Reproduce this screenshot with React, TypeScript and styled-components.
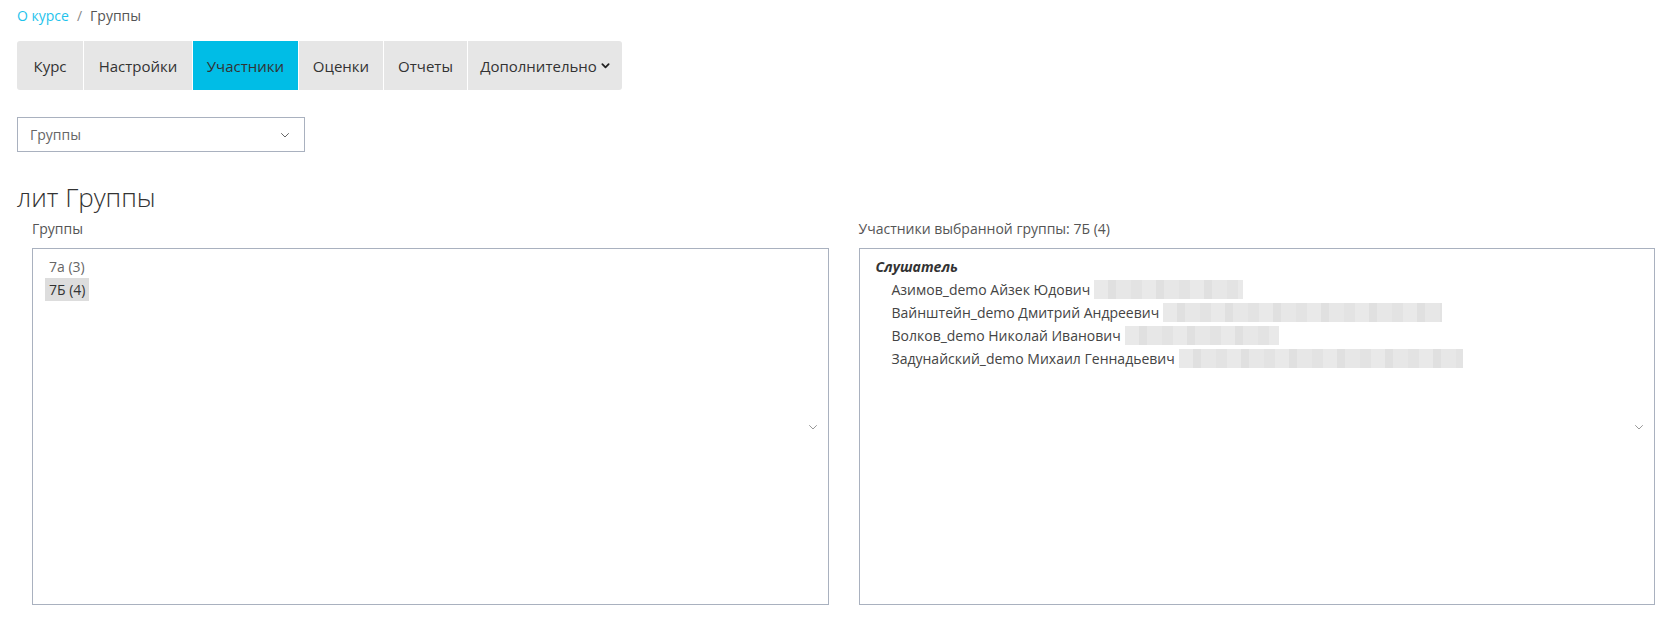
import styled, { createGlobalStyle } from "styled-components";

const GlobalStyle = createGlobalStyle`
  body {
    margin: 0;
    background: #ffffff;
    font-family: "Open Sans", "Liberation Sans", sans-serif;
    font-size: 15px;
    color: #333333;
  }
`

const Page = styled.div`
    padding: 5px 15px 0 17px;
`

const Breadcrumb = styled.nav`
    display: flex;
    align-items: center;
    gap: 8px;
    height: 20px;
    font-size: 14px;
    color: #555;
`

const Crumb = styled.a`
    color: #1fc3ec;
    text-decoration: none;
`

const Sep = styled.span`
    color: #888;
`

const Tabs = styled.ul`
    display: inline-flex;
    list-style: none;
    margin: 16px 0 0;
    padding: 0;
    border-radius: 3px;
    overflow: hidden;
    gap: 1px;
    background-color: #ffffff;
`

const Tab = styled.li<{ $active?: boolean; $w: number }>`
    display: flex;
    align-items: center;
    justify-content: center;
    gap: 4px;
    width: ${p => p.$w}px;
    height: 49px;
    background: ${p => (p.$active ? "#00bde6" : "#e6e6e6")};
    color: #333;
    font-size: 15px;
`

const Select = styled.div`
    display: flex;
    align-items: center;
    justify-content: space-between;
    width: 288px;
    height: 35px;
    box-sizing: border-box;
    margin-top: 27px;
    padding: 0 14px 0 12px;
    border: 1px solid #a9b1bf;
    color: #666;
    font-size: 14px;
`

const Heading = styled.h2`
    margin: 28px 0 0;
    font-size: 26px;
    font-weight: 300;
    color: #333;
    line-height: 34px;
`

const Columns = styled.div`
    display: grid;
    grid-template-columns: 1fr 1fr;
    gap: 30px;
    margin-top: 5px;
    padding-left: 15px;
`

const Field = styled.div`
    display: flex;
    flex-direction: column;
`

const Label = styled.label`
    font-size: 14px;
    color: #555;
    height: 20px;
    line-height: 20px;
    margin-bottom: 9px;
`

const ListBox = styled.div`
    display: flex;
    align-items: center;
    height: 357px;
    box-sizing: border-box;
    border: 1px solid #a9b1bf;
    padding: 0 10px 0 12px;
`

const ListContent = styled.div`
    flex: 1;
    align-self: stretch;
    padding-top: 6px;
`

const Option = styled.div<{ $selected?: boolean; $indent?: boolean }>`
    display: flex;
    align-items: center;
    width: fit-content;
    height: 23px;
    padding: 0 4px;
    margin-left: ${p => (p.$indent ? "16px" : "0")};
    background: ${p => (p.$selected ? "#dddddd" : "transparent")};
    color: ${p => (p.$selected ? "#333" : "#666")};
    font-size: 14px;
`

const Member = styled(Option)`
    color: #444;
`

const GroupTitle = styled.div`
    height: 23px;
    line-height: 23px;
    padding-left: 4px;
    font-weight: 700;
    font-style: italic;
    font-size: 14px;
    color: #333;
`

const Blur = styled.span<{ $w: number }>`
    display: inline-block;
    width: ${p => p.$w}px;
    height: 19px;
    margin-left: 4px;
    background: repeating-linear-gradient(
        90deg,
        #e9e9e9 0 14px,
        #e0e0e0 14px 22px,
        #e7e7e7 22px 37px,
        #e3e3e3 37px 48px
    );
`

const Chevron = ({ size = 10, color = "#888", weight = 1 }: { size?: number; color?: string; weight?: number }) => (
  <svg width={size} height={size} viewBox="0 0 10 10" fill="none">
    <path d="M1.5 3.5 L5 7 L8.5 3.5" stroke={color} strokeWidth={weight} strokeLinecap="round" strokeLinejoin="round" />
  </svg>
)

const tabs = [
  { label: "Курс", w: 66 },
  { label: "Настройки", w: 108 },
  { label: "Участники", w: 105, active: true },
  { label: "Оценки", w: 84 },
  { label: "Отчеты", w: 83 },
  { label: "Дополнительно", w: 154, menu: true },
]

const members = [
  { name: "Азимов_demo Айзек Юдович", w: 149 },
  { name: "Вайнштейн_demo Дмитрий Андреевич", w: 279 },
  { name: "Волков_demo Николай Иванович", w: 154 },
  { name: "Задунайский_demo Михаил Геннадьевич", w: 284 },
]

export default function App() {
  return (
    <>
      <GlobalStyle />
      <Page>
        <Breadcrumb>
          <Crumb href="#">О курсе</Crumb>
          <Sep>/</Sep>
          <span>Группы</span>
        </Breadcrumb>
        <Tabs>
          {tabs.map(t => (
            <Tab key={t.label} $w={t.w} $active={t.active}>
              {t.label}
              {t.menu && <Chevron size={9} color="#222" weight={2} />}
            </Tab>
          ))}
        </Tabs>
        <Select>
          Группы
          <Chevron size={10} color="#666" />
        </Select>
        <Heading>лит Группы</Heading>
        <Columns>
          <Field>
            <Label>Группы</Label>
            <ListBox>
              <ListContent>
                <Option>7а (3)</Option>
                <Option $selected>7Б (4)</Option>
              </ListContent>
              <Chevron size={10} color="#999" />
            </ListBox>
          </Field>
          <Field>
            <Label>Участники выбранной группы: 7Б (4)</Label>
            <ListBox>
              <ListContent>
                <GroupTitle>Слушатель</GroupTitle>
                {members.map(m => (
                  <Member key={m.name} $indent>
                    {m.name}
                    <Blur $w={m.w} />
                  </Member>
                ))}
              </ListContent>
              <Chevron size={10} color="#999" />
            </ListBox>
          </Field>
        </Columns>
      </Page>
    </>
  );
}
